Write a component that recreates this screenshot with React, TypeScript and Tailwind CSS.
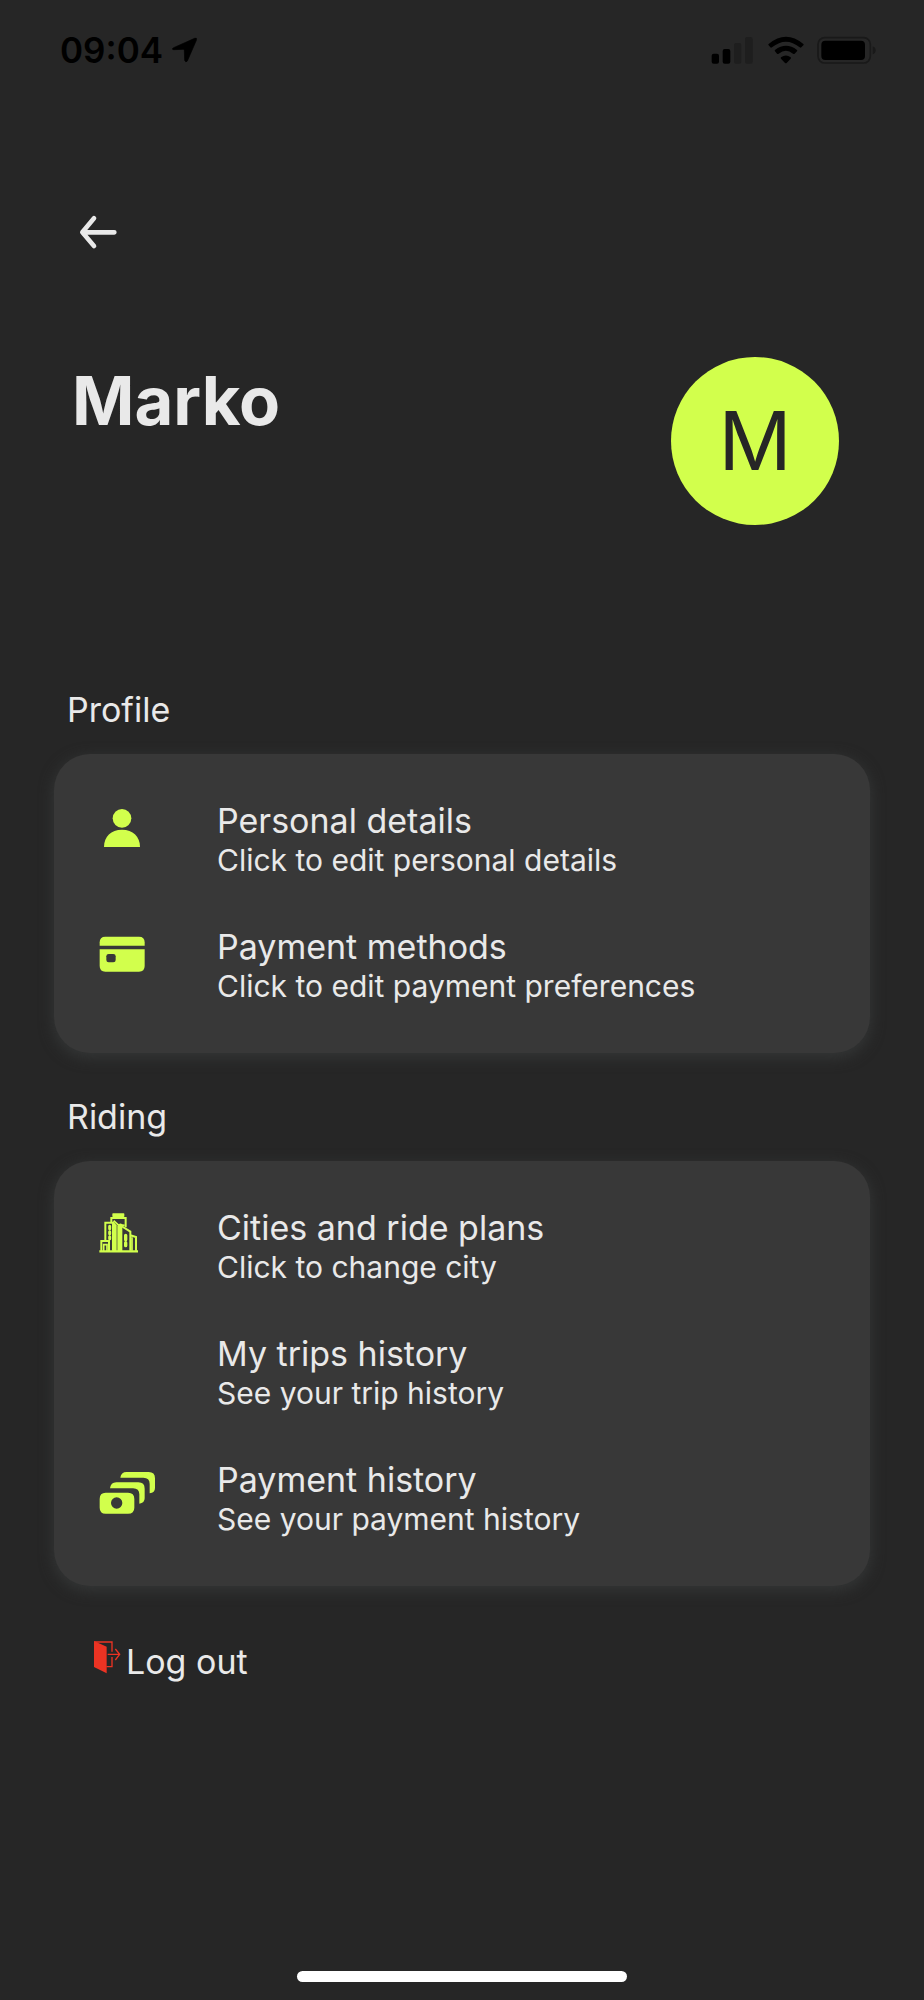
import type { ReactNode } from "react";

function LocationIcon() {
  return (
    <svg className="h-7 w-7" viewBox="388 48 84 84" aria-hidden="true">
      <path
        d="M396 83 L459 55 Q467 52 464 61 L437 123 Q432 129 429 121 L428 91 Q428 88 425 88 L396 89 Q388 87 396 83Z"
        fill="#000"
        stroke="#000"
        strokeWidth="2"
      />
    </svg>
  );
}

function SignalIcon() {
  return (
    <svg className="h-7 w-11" viewBox="34 48 132 84" aria-hidden="true">
      <rect x="36" y="101" width="22" height="30" rx="6" fill="#000" />
      <rect x="69" y="87" width="23" height="44" rx="6" fill="#000" />
      <rect x="103" y="69" width="22" height="62" rx="6" fill="#1e1e1e" />
      <rect x="136" y="51" width="23" height="80" rx="6" fill="#1e1e1e" />
    </svg>
  );
}

function WifiIcon() {
  return (
    <svg className="h-7 w-9" viewBox="202 48 108 84" aria-hidden="true">
      <path
        d="M204 72 Q256 29 308 72 Q310 74 308 76 L302 82 Q300 84 297 82 Q256 48 214 82 Q211 84 209 82 L204 76 Q202 74 204 72Z"
        fill="#000"
      />
      <path
        d="M223 90 Q256 65 289 90 Q291 92 289 94 L282 101 Q280 103 277 101 Q256 84 234 101 Q231 103 229 101 L223 94 Q221 92 223 90Z"
        fill="#000"
      />
      <path d="M241 112 Q256 101 270 112 Q272 114 270 116 L258 129 Q256 131 253 129 L241 116 Q239 114 241 112Z" fill="#000" />
    </svg>
  );
}

function BatteryIcon() {
  return (
    <svg className="h-7 w-15" viewBox="352 48 180 84" aria-hidden="true">
      <rect x="355" y="53" width="157" height="76" rx="20" fill="none" stroke="#191919" strokeWidth="5" />
      <rect x="365" y="62" width="131" height="58" rx="12" fill="#000" />
      <path d="M519 79 Q528 82 528 91 Q528 100 519 103Z" fill="#191919" />
    </svg>
  );
}

function PersonIcon() {
  return (
    <svg className="size-16" viewBox="168 354 192 192" fill="#d2ff4c" aria-hidden="true">
      <circle cx="246" cy="415" r="28" />
      <path d="M192 501 C192 470 213 449 246 449 C279 449 300 470 300 501Z" />
    </svg>
  );
}

function CardIcon() {
  return (
    <svg className="size-16" viewBox="48 42 192 192" aria-hidden="true">
      <path d="M59 107 V97 Q59 80 76 80 H177 Q194 80 194 97 V107Z" fill="#d2ff4c" />
      <path d="M59 118 H194 V168 Q194 185 177 185 H76 Q59 185 59 168Z" fill="#d2ff4c" />
      <rect x="79" y="132" width="28" height="25" rx="7" fill="#383838" />
    </svg>
  );
}

function CityIcon() {
  return (
    <svg className="size-16" viewBox="48 45 192 192" fill="none" stroke="#d2ff4c" aria-hidden="true">
      <rect x="97" y="70" width="36" height="11" rx="2" fill="#d2ff4c" stroke="none" />
      <path d="M94 96 V84 H137 V112" strokeWidth="6" />
      <path d="M76 151 V98 H99 V182" strokeWidth="6" />
      <path d="M101 92 L114 104 L134 106" strokeWidth="5" />
      <path d="M99 93 L110 106 V183 H99Z" fill="#d2ff4c" stroke="none" />
      <path d="M116 103 Q122 97 127 104 V183 H112 V108Z" fill="#d2ff4c" stroke="none" />
      <path d="M124 108 L151 125 V182 M151 136 L168 141 V182" strokeWidth="6" />
      <path d="M156 142 V182" strokeWidth="5" />
      <path d="M64 184 V153 H87 V184" strokeWidth="6" />
      <path d="M71 184 V164 H81 V184" strokeWidth="5" />
      <path d="M58 184 H174" strokeWidth="7" />
      <path d="M89 109 V116 M89 125 V131 M89 140 V146" strokeWidth="9" strokeLinecap="round" />
      <path d="M137 136 V149 M137 158 V167" strokeWidth="10" strokeLinecap="round" />
    </svg>
  );
}

function CashIcon() {
  return (
    <svg className="size-16" viewBox="48 21 192 192" fill="#d2ff4c" aria-hidden="true">
      <path d="M121 83 Q123 66 140 66 H206 Q225 66 225 85 V114 Q225 128 209 130 V102 Q209 83 190 83Z" />
      <path d="M90 115 Q92 97 109 97 H175 Q194 97 194 116 V145 Q194 159 178 161 V133 Q178 115 159 115Z" />
      <path
        fillRule="evenodd"
        d="M77 128 H144 Q163 128 163 147 V173 Q163 191 144 191 H77 Q59 191 59 173 V147 Q59 128 77 128Z M110 142 A17 17 0 1 0 110 176 A17 17 0 1 0 110 142Z"
      />
    </svg>
  );
}

function LogOutIcon() {
  return (
    <svg className="h-9 w-7" viewBox="159 303 84 108" fill="none" stroke="#ec3323" aria-hidden="true">
      <path d="M162 306 L200 323 V403 L162 384Z" fill="#ec3323" stroke="none" />
      <path d="M163 309 H216 V338 M216 354 V383 H199" strokeWidth="4" />
      <path d="M203 346 H239 M226 330 L239 346 L226 363" strokeWidth="4" />
    </svg>
  );
}

type Item = { title: string; note: string; icon?: ReactNode };

const profileItems: Item[] = [
  { title: "Personal details", note: "Click to edit personal details", icon: <PersonIcon /> },
  { title: "Payment methods", note: "Click to edit payment preferences", icon: <CardIcon /> },
];

const ridingItems: Item[] = [
  { title: "Cities and ride plans", note: "Click to change city", icon: <CityIcon /> },
  { title: "My trips history", note: "See your trip history" },
  { title: "Payment history", note: "See your payment history", icon: <CashIcon /> },
];

function Section({ heading, items }: { heading: string; items: Item[] }) {
  return (
    <section>
      <h2 className="mb-[21px] px-[13px] text-[34px] leading-[46px]">{heading}</h2>
      <ul className="flex flex-col gap-12 rounded-[36px] bg-[#383838] px-[42px] pt-11 pb-[51px] shadow-[0_4px_14px_1px_#343636]">
        {items.map((item) => (
          <li key={item.title}>
            <button type="button" className="flex h-[78px] w-full items-start text-left">
              <span className="w-[121px] shrink-0">{item.icon}</span>
              <span className="flex flex-col">
                <span className="text-[34px] leading-[46px]">{item.title}</span>
                <span className="text-[30px] leading-8">{item.note}</span>
              </span>
            </button>
          </li>
        ))}
      </ul>
    </section>
  );
}

export default function App() {
  return (
    <div className="flex min-h-screen flex-col bg-[#262626] font-['Inter','Liberation_Sans',sans-serif] text-[#e9e9e9]">
      <div className="flex h-25 items-center justify-between pr-[47px] pl-[60px] text-black">
        <div className="flex items-center gap-2">
          <span className="text-[35px] leading-11 font-semibold">09:04</span>
          <LocationIcon />
        </div>
        <div className="flex items-center gap-[13px]">
          <SignalIcon />
          <WifiIcon />
          <BatteryIcon />
        </div>
      </div>

      <main className="px-[54px] pt-25">
        <button type="button" aria-label="Back" className="ml-3 flex size-16 items-center justify-center">
          <svg className="h-9 w-10" viewBox="54 42 120 108" fill="none" stroke="#e9e9e9" aria-hidden="true">
            <path
              d="M102 55 L67 97 L102 138 M69 97 H163"
              strokeWidth="14"
              strokeLinecap="round"
              strokeLinejoin="round"
            />
          </svg>
        </button>

        <header className="mt-[93px] flex items-start justify-between pr-[31px] pl-[18px]">
          <h1 className="text-[67px] leading-[88px] font-bold">Marko</h1>
          <div className="flex size-42 items-center justify-center rounded-full bg-[#d2ff4c] text-[81px] leading-none text-[#262626]">
            M
          </div>
        </header>

        <div className="mt-[162px] flex flex-col gap-[41px]">
          <Section heading="Profile" items={profileItems} />
          <Section heading="Riding" items={ridingItems} />
        </div>

        <button type="button" className="mt-[54px] ml-[39px] flex items-start gap-[5px] text-[34px] leading-11">
          <LogOutIcon />
          <span>Log out</span>
        </button>
      </main>

      <div className="mt-auto flex justify-center pt-10 pb-[18px]">
        <div className="h-[11px] w-[330px] rounded-full bg-white" />
      </div>
    </div>
  );
}
